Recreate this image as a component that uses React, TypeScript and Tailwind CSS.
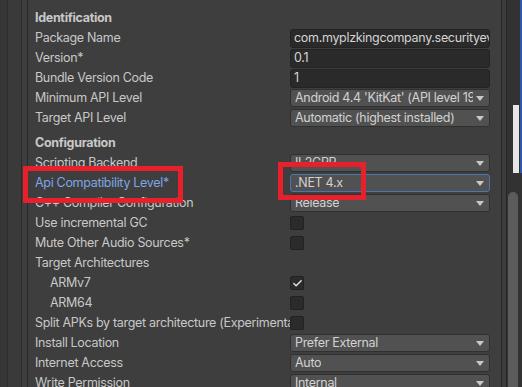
import { Check } from 'lucide-react';

type Row =
  | { kind: 'header'; label: string }
  | { kind: 'text'; label: string; value: string }
  | { kind: 'select'; label: string; value: string; focused?: boolean }
  | { kind: 'check'; label: string; checked?: boolean; indent?: boolean }
  | { kind: 'plain'; label: string };

const IDENTIFICATION: Row[] = [
  { kind: 'text', label: 'Package Name', value: 'com.myplzkingcompany.securityevent' },
  { kind: 'text', label: 'Version*', value: '0.1' },
  { kind: 'text', label: 'Bundle Version Code', value: '1' },
  { kind: 'select', label: 'Minimum API Level', value: "Android 4.4 'KitKat' (API level 19)" },
  { kind: 'select', label: 'Target API Level', value: 'Automatic (highest installed)' },
];

const CONFIGURATION: Row[] = [
  { kind: 'select', label: 'Scripting Backend', value: 'IL2CPP' },
  { kind: 'select', label: 'Api Compatibility Level*', value: '.NET 4.x', focused: true },
  { kind: 'select', label: 'C++ Compiler Configuration', value: 'Release' },
  { kind: 'check', label: 'Use incremental GC' },
  { kind: 'check', label: 'Mute Other Audio Sources*' },
  { kind: 'plain', label: 'Target Architectures' },
  { kind: 'check', label: 'ARMv7', checked: true, indent: true },
  { kind: 'check', label: 'ARM64', indent: true },
  { kind: 'check', label: 'Split APKs by target architecture (Experimental)' },
  { kind: 'select', label: 'Install Location', value: 'Prefer External' },
  { kind: 'select', label: 'Internet Access', value: 'Auto' },
  { kind: 'select', label: 'Write Permission', value: 'Internal' },
];

function Field({ row }: { row: Row }) {
  if (row.kind === 'text') {
    return (
      <div className="h-[19px] w-[200px] rounded-[3px] border border-[#232323] bg-[#2a2a2a] px-[3px] flex items-center overflow-hidden whitespace-nowrap text-[#d4d4d4]">
        {row.value}
      </div>
    );
  }
  if (row.kind === 'select') {
    return (
      <div
        className={`h-[18px] w-[200px] rounded-[3px] border ${
          row.focused ? 'border-[#4a77ad]' : 'border-[#303030]'
        } bg-[#515151] pl-[4px] pr-[5px] flex items-center justify-between text-[#d2d2d2]`}
      >
        <span className="overflow-hidden whitespace-nowrap">{row.value}</span>
        <svg width="8" height="5" viewBox="0 0 8 5" className="shrink-0 ml-[3px]">
          <path d="M0 0 H8 L4 5 Z" fill="#c8c8c8" />
        </svg>
      </div>
    );
  }
  if (row.kind === 'check') {
    return (
      <div className="h-[14px] w-[14px] rounded-[2px] border border-[#222222] bg-[#2b2b2b] flex items-center justify-center">
        {row.checked && <Check className="w-[11px] h-[11px] text-[#e4e4e4]" strokeWidth={3} />}
      </div>
    );
  }
  return null;
}

function SettingRow({ row }: { row: Row }) {
  const focused = row.kind === 'select' && row.focused;
  return (
    <div className="h-5 flex items-center">
      <div
        className={`w-[255px] shrink-0 overflow-hidden whitespace-nowrap ${
          row.kind === 'check' && row.indent ? 'pl-[15px]' : ''
        } ${focused ? 'text-[#7ea5e6]' : 'text-[#c8c8c8]'}`}
      >
        {row.label}
      </div>
      <Field row={row} />
    </div>
  );
}

export default function App() {
  return (
    <div className="relative w-[522px] h-[387px] overflow-hidden flex bg-[#3e3e3e] font-['Inter','Noto_Sans',sans-serif] text-[12.5px] tracking-[-0.025em] leading-5">
      {/* Left gutters */}
      <div className="w-[8px] shrink-0 bg-[#363636] border-r border-[#2c2c2c]" />
      <div className="w-[14px] shrink-0 bg-[#3a3a3a] border-r border-[#2a2a2a]" />
      <div className="w-[6px] shrink-0 bg-[#3e3e3e] border-r border-[#282828]" />

      {/* Inspector content */}
      <div className="w-[473px] shrink-0 pl-[7px] pt-[8px] flex flex-col">
        <div className="h-5 flex items-center font-bold text-[#c8c8c8]">Identification</div>
        {IDENTIFICATION.map((row) => (
          <SettingRow key={row.label} row={row} />
        ))}
        <div className="h-5 mt-[5px] flex items-center font-bold text-[#c8c8c8]">Configuration</div>
        {CONFIGURATION.map((row) => (
          <SettingRow key={row.label} row={row} />
        ))}
      </div>

      {/* Right gutters + scrollbar */}
      <div className="w-[6px] shrink-0 bg-[#3d3d3d] border-l border-r border-[#262626]" />
      <div className="relative flex-1 bg-[#323232]">
        <div className="absolute right-0 top-0 w-[2px] h-[173px] bg-[#2d5aa8]" />
        <div className="absolute left-[6px] top-[105px] w-[6px] h-[68px] bg-[#e6e6e6]" />
        <div className="absolute left-[1px] top-[192px] w-[10px] h-[200px] rounded-t-[5px] bg-[#5b5b5b]" />
      </div>

      {/* Annotation boxes */}
      <div className="absolute left-[23px] top-[166px] w-[160px] h-[37px] border-[5px] border-[#e8202c]" />
      <div className="absolute left-[278px] top-[162px] w-[88px] h-[38px] border-[5px] border-[#e8202c]" />
    </div>
  );
}
